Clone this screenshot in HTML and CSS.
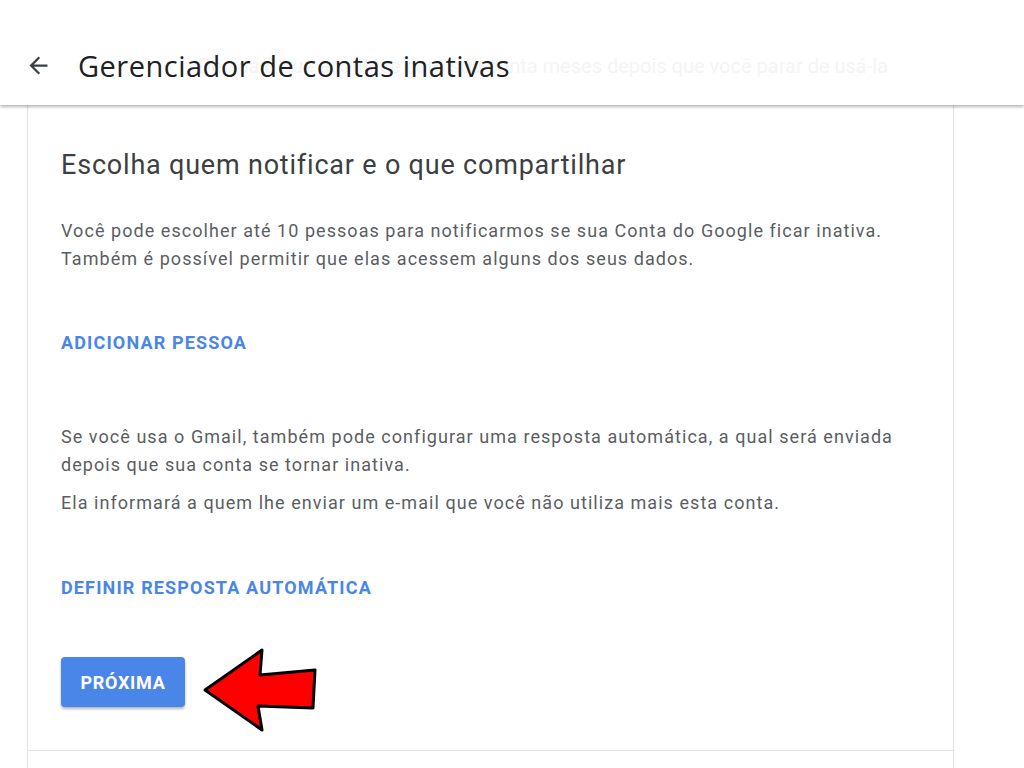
FILE: index.html
```html
<!DOCTYPE html>
<html lang="pt-BR">
<head>
<meta charset="utf-8">
<title>Gerenciador de contas inativas</title>
<link rel="stylesheet" href="styles.css">
</head>
<body>
<header class="topbar">
  <span class="ghost">Decida o que acontece com sua conta meses depois que você parar de usá-la</span>
  <svg class="back" viewBox="0 0 24 24" width="27" height="27" aria-hidden="true"><path d="M20 11H7.83l5.59-5.59L12 4l-8 8 8 8 1.41-1.41L7.83 13H20v-2z" fill="#3c4043"/></svg>
  <h1 class="title">Gerenciador de contas inativas</h1>
</header>
<main class="column">
  <section class="card">
    <h2 class="heading">Escolha quem notificar e o que compartilhar</h2>
    <p class="text first">Você pode escolher até 10 pessoas para notificarmos se sua Conta do Google ficar inativa.<br>Também é possível permitir que elas acessem alguns dos seus dados.</p>
    <a class="link add">ADICIONAR PESSOA</a>
    <p class="text gmail">Se você usa o Gmail, também pode configurar uma resposta automática, a qual será enviada<br>depois que sua conta se tornar inativa.</p>
    <p class="text info">Ela informará a quem lhe enviar um e-mail que você não utiliza mais esta conta.</p>
    <a class="link auto">DEFINIR RESPOSTA AUTOMÁTICA</a>
    <div class="actions">
      <button class="next">PRÓXIMA</button>
    </div>
    <svg class="arrow" viewBox="0 0 120 90" width="120" height="90" aria-hidden="true">
      <polygon points="5,45 62,5 60,30 115,25 113,63 58,61 62,85" fill="#ff0000" stroke="#000" stroke-width="3" stroke-linejoin="round"/>
    </svg>
  </section>
</main>
</body>
</html>
```

FILE: styles.css
```css
html, body {
  margin: 0;
  padding: 0;
  background: #ffffff;
  font-family: Roboto, "Liberation Sans", Arial, sans-serif;
}

.topbar {
  position: relative;
  z-index: 2;
  height: 105px;
  background: #ffffff;
  display: flex;
  align-items: center;
  padding: 26px 0 0 25px;
  box-sizing: border-box;
  box-shadow: 0 2px 3px rgba(0, 0, 0, 0.28);
}

.ghost {
  position: absolute;
  right: 136px;
  top: 54px;
  font-size: 20px;
  color: #f4f4f4;
  white-space: nowrap;
}

.back {
  position: relative;
  flex: none;
}

.title {
  position: relative;
  margin: 0 0 0 26px;
  font-family: "Open Sans", Roboto, "Liberation Sans", sans-serif;
  font-weight: 400;
  font-size: 29px;
  letter-spacing: 0.5px;
  color: #202124;
}

.column {
  margin-left: 27px;
  width: 927px;
  min-height: 663px;
  border-left: 1px solid #e2e2e2;
  border-right: 1px solid #e2e2e2;
  box-sizing: border-box;
}

.card {
  position: relative;
  padding: 44px 33px 43px 33px;
  border-bottom: 1px solid #e2e2e2;
  display: flex;
  flex-direction: column;
  align-items: flex-start;
}

.heading {
  margin: 0;
  font-size: 27px;
  line-height: 32px;
  font-weight: 400;
  letter-spacing: 0.8px;
  color: #3c4043;
}

.text {
  margin: 0;
  font-size: 18px;
  line-height: 28px;
  letter-spacing: 1.05px;
  color: #5a5e63;
}

.first { margin-top: 36px; }
.gmail { margin-top: 70px; }
.info { margin-top: 10px; }

.link {
  display: block;
  font-size: 18px;
  line-height: 20px;
  font-weight: 700;
  letter-spacing: 1.15px;
  color: #4a86e8;
  cursor: pointer;
}

.add { margin-top: 60px; }
.auto { margin-top: 61px; }

.actions { margin-top: 59px; }

.next {
  width: 124px;
  height: 50px;
  padding: 0;
  border: none;
  border-radius: 4px;
  background: #4a86e8;
  color: #ffffff;
  font-family: Roboto, "Liberation Sans", sans-serif;
  font-size: 18px;
  font-weight: 700;
  letter-spacing: 0.7px;
  box-shadow: 0 2px 3px rgba(0, 0, 0, 0.3);
  cursor: pointer;
}

.arrow {
  position: absolute;
  left: 172px;
  top: 540px;
}
```
